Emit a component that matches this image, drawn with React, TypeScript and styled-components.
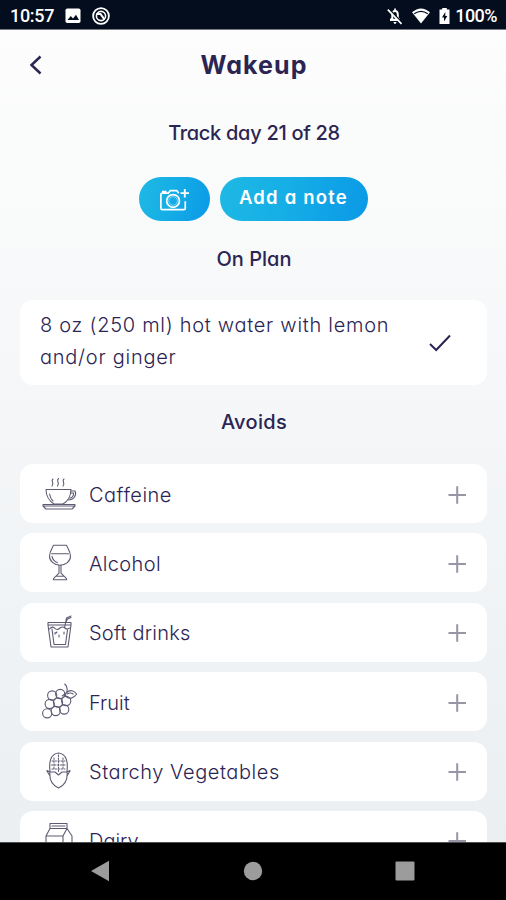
import React from "react";
import styled, { createGlobalStyle } from "styled-components";

const INK = "#2b2553";

const GlobalStyle = createGlobalStyle`
  *, *::before, *::after { box-sizing: border-box; }
  body { margin: 0; background: #000; }
`;

const Screen = styled.div`
  width: 506px;
  height: 900px;
  display: flex;
  flex-direction: column;
  overflow: hidden;
  color: ${INK};
  font-family: Inter, "Open Sans", sans-serif;
  font-feature-settings: "cv11", "ss03";
`;

const StatusBar = styled.header`
  flex: none;
  height: 30px;
  padding: 3px 9px 0 10px;
  display: flex;
  align-items: center;
  justify-content: space-between;
  background: #030d1e;
  border-bottom: 1px solid #77797f;
  color: #fff;
  font: 500 18px/24px Roboto, sans-serif;
`;

const StatusGroup = styled.div<{ $gap: number }>`
  display: flex;
  align-items: center;
  gap: ${(p) => p.$gap}px;
`;

const StatusText = styled.span<{ $spacing: number }>`
  letter-spacing: ${(p) => p.$spacing}px;
`;

const Page = styled.main`
  flex: 1;
  min-height: 0;
  overflow: hidden;
  display: flex;
  flex-direction: column;
  background: linear-gradient(180deg, #fdfdfd 0%, #f9fafa 22%, #f4f6f8 50%, #ebeff1 100%);
`;

const TitleBar = styled.div`
  flex: none;
  height: 70px;
  padding: 0 28px;
  display: grid;
  grid-template-columns: 20px 1fr 20px;
  align-items: center;
`;

const BackButton = styled.button`
  display: flex;
  padding: 0;
  border: 0;
  background: none;
`;

const Title = styled.h1<{ $spacing: number }>`
  margin: 0;
  padding-left: 2px;
  text-align: center;
  font-size: 25px;
  line-height: 32px;
  font-weight: 650;
  letter-spacing: ${(p) => p.$spacing}px;
`;

const Heading = styled.h2<{ $height: number; $lift: number; $spacing: number }>`
  flex: none;
  height: ${(p) => p.$height}px;
  margin: 0;
  padding: 0 0 ${(p) => p.$lift * 2}px 2px;
  display: flex;
  align-items: center;
  justify-content: center;
  font-size: 20px;
  font-weight: 500;
  letter-spacing: ${(p) => p.$spacing}px;
`;

const Actions = styled.div`
  flex: none;
  height: 44px;
  display: flex;
  justify-content: center;
  gap: 10px;
`;

const Pill = styled.button<{ $width: number; $lift?: number }>`
  width: ${(p) => p.$width}px;
  height: 44px;
  padding: 0 0 ${(p) => p.$lift ?? 0}px;
  border: 0;
  border-radius: 22px;
  display: flex;
  align-items: center;
  justify-content: center;
  color: #fff;
  background: linear-gradient(105deg, #1fb9e4 0%, #15aee6 45%, #0b98e6 100%);
  font: inherit;
  font-feature-settings: inherit;
  font-size: 18.5px;
  font-weight: 600;
  letter-spacing: 1.2px;
`;

const PlanCard = styled.section`
  flex: none;
  height: 85px;
  margin: 0 19px 0 20px;
  padding: 0 35px 0 20px;
  display: flex;
  align-items: center;
  justify-content: space-between;
  border-radius: 13px;
  background: #fff;
`;

const PlanText = styled.p`
  margin: 0;
  padding-bottom: 3px;
  font-size: 20px;
  line-height: 32px;
  font-weight: 300;
`;

const Line = styled.span<{ $spacing: number }>`
  display: block;
  white-space: nowrap;
  letter-spacing: ${(p) => p.$spacing}px;
`;

const List = styled.ul`
  flex: none;
  margin: 0 19px 0 20px;
  padding: 0;
  display: flex;
  flex-direction: column;
  gap: 10.4px;
  list-style: none;
`;

const Row = styled.li`
  height: 59px;
  padding: 0 20px 0 19px;
  display: grid;
  grid-template-columns: 40px 1fr 20px;
  column-gap: 10px;
  align-items: center;
  border-radius: 13px;
  background: #fff;
`;

const Label = styled.span<{ $spacing: number }>`
  padding-top: 2px;
  font-size: 20px;
  line-height: 28px;
  font-weight: 300;
  white-space: nowrap;
  letter-spacing: ${(p) => p.$spacing}px;
`;

const NavBar = styled.nav`
  flex: none;
  height: 58px;
  padding: 0 91px 2px 90px;
  display: flex;
  align-items: center;
  justify-content: space-between;
  background: #000;
  border-top: 1px solid #4c4e50;
`;

const LineIcon = styled.svg`
  display: block;
  fill: none;
  stroke: #5d5b72;
  stroke-width: 1.1;
  stroke-linecap: round;
  stroke-linejoin: round;
`;

const Glyph = styled.svg`
  display: block;
  overflow: visible;
`;

const CupIcon = () => (
  <LineIcon width="40" height="40" viewBox="0 -1 40 40">
    <path d="M7 14.5H32C32 20 29 26 24 29H15C10 26 7 20 7 14.5Z" />
    <path d="M32 16H36C38 20 35 25 29 25M31.7 18H34.5C35 21 33 23 30.5 23" />
    <path d="M4 29.5H36V31L33 34H7L4 31ZM4 31H36M10.5 19C11 22 12 24 14 26" />
    <path d="M14 4C11 6 16 8 13 11M19.5 3.5C16.5 6 21.5 8 18.5 11M25 4C22 6 27 8 24 11" />
  </LineIcon>
);

const GlassIcon = () => (
  <LineIcon width="40" height="40" viewBox="-.5 .8 40 40">
    <path d="M14 3H27C28 6 31 9 31 14C31 19 26 23 20.5 23S10 19 10 14C10 9 13 6 14 3ZM12 11.5H29M12.5 14C13 17 15 19.5 18 20.5" />
    <path d="M19.5 23V31L14 36.5V37.5H27V36.5L21.5 31V23M17 34H24" />
  </LineIcon>
);

const DrinkIcon = () => (
  <LineIcon width="40" height="40" viewBox="-1 -2 40 40">
    <path d="M8 8.5H31V11L28 33H11L8 11ZM9 11H30" />
    <path d="M9.5 15Q12 12 14.5 14Q17 17 20 14Q22.5 12 25 14Q27 16 29.5 14M12 15L14 30.5H25.5L27.5 16M24.5 14L26.5 4L31 2M26 8L27.5 5L31 3.5" />
    <path d="M15 18.5V20M19 21V23M24 18V20M16 19L17 18" />
  </LineIcon>
);

const GRAPES = [
  [14, 13.5], [22, 12], [28, 19], [19.8, 20.5], [11.5, 22], [26, 27.5], [17.5, 29], [9, 31.3],
];

const GrapesIcon = () => (
  <LineIcon width="40" height="40" viewBox=".8 0 40 40">
    {GRAPES.map(([x, y]) => (
      <circle key={`${x}-${y}`} cx={x} cy={y} r="4.6" />
    ))}
    <path d="M24 14L28.5 10.5C29.5 8 29 4 26.5 2M28.5 10.5C32 7 36 9 38.5 12C35 17 31 17 28.5 15C26.5 13.5 27 11.5 28.5 10.5ZM29 12Q32 10 35 12" />
  </LineIcon>
);

const CornIcon = () => (
  <LineIcon width="40" height="40" viewBox="0 0 40 40">
    <path d="M11 20C10 12 11 3 19.5 2C28 3 29 12 28 20M11 20C10 28 13 34 19.5 37C26 34 29 28 28 20M8 19.5L11 21H16L19.5 24L23 21H28L31 19.5M11 25L8 20M28 25L31 20" />
    <path d="M15 7V19M19.5 4V21M24 7V19M13 10H26M12.5 14H26.5M13 18H26" strokeWidth="1" strokeDasharray="1.5 1.5" />
  </LineIcon>
);

const MilkIcon = () => (
  <LineIcon width="40" height="40" viewBox="0 -1 40 40">
    <path d="M11 2.5H28V7.5H11ZM11 7.5L7 15V38H33V15L28 7.5M7 15H24V38M24 15L28 7.5L33 15M13 5H26" />
  </LineIcon>
);

const PlusIcon = () => (
  <Glyph width="20" height="20" viewBox="0 0 20 20">
    <path d="M10.2 2.2V19.8M1.5 11H19" fill="none" stroke="#9895a6" strokeWidth="2" />
  </Glyph>
);

const ITEMS: { name: string; spacing: number; Icon: React.FC }[] = [
  { name: "Caffeine", spacing: 0.5, Icon: CupIcon },
  { name: "Alcohol", spacing: 0.35, Icon: GlassIcon },
  { name: "Soft drinks", spacing: 0.2, Icon: DrinkIcon },
  { name: "Fruit", spacing: 0, Icon: GrapesIcon },
  { name: "Starchy Vegetables", spacing: 0.55, Icon: CornIcon },
  { name: "Dairy", spacing: 0, Icon: MilkIcon },
];

export default function App() {
  return (
    <>
      <GlobalStyle />
      <Screen>
        <StatusBar>
          <StatusGroup $gap={11}>
            <StatusText $spacing={-0.3}>10:57</StatusText>
            <Glyph width="16" height="16" viewBox="0 0 16 16">
              <rect x="0.5" y="0.5" width="15" height="14.5" rx="1.8" fill="#fff" />
              <path d="M2.5 12L5.8 8L8 10.4L11 6.8L14 12Z" fill="#030d1e" />
            </Glyph>
            <Glyph width="18" height="18" viewBox="0 0 18 18" fill="none" stroke="#fff">
              <circle cx="9" cy="9" r="7.9" strokeWidth="1.8" />
              <circle cx="9" cy="9" r="4.6" strokeWidth="1.6" />
              <path d="M4.6 7H8.5L12.4 12.4" strokeWidth="2" />
            </Glyph>
          </StatusGroup>
          <StatusGroup $gap={5}>
            <Glyph width="16" height="18" viewBox="0 0 16 18">
              <path d="M3 14V12L4.3 10.8V7.5C4.3 5 5.7 3.4 7.2 3V1.5H8.9V3C10.7 3.5 11.8 5 11.8 7.5V10.8L13 12V14ZM6.4 15H9.6Q9 17 8 17T6.4 15Z" fill="#fff" />
              <path d="M6.2 11.8V8Q6.2 5 8 5T9.8 8V11.8Z" fill="#030d1e" />
              <path d="M1.8 1.8L15.5 16" stroke="#030d1e" strokeWidth="1.6" />
              <path d="M.8 2.6L14.5 16.8" stroke="#fff" strokeWidth="1.7" />
            </Glyph>
            <Glyph width="26" height="18" viewBox="1 0 26 18">
              <path d="M5 5.3Q14 -2.5 23 5.3L14 16.5Z" fill="#fff" />
              <path d="M7.2 6.8Q14 1.8 20.8 6.8" fill="none" stroke="#030d1e" strokeWidth="1.3" />
            </Glyph>
            <Glyph width="11" height="18" viewBox="0 0 11 18">
              <path d="M3.2 1H7.8V2.5H10.5V17H.5V2.5H3.2Z" fill="#fff" />
              <path d="M6.3 5L3 10.5H5V14.5L8.3 9H6.3Z" fill="#030d1e" />
            </Glyph>
            <StatusText $spacing={-0.55}>100%</StatusText>
          </StatusGroup>
        </StatusBar>

        <Page>
          <TitleBar>
            <BackButton aria-label="Back">
              <Glyph width="14" height="20" viewBox="0 0 14 20">
                <path d="M12.5 1.5L3.5 10L12.5 18.5" fill="none" stroke={INK} strokeWidth="2.5" />
              </Glyph>
            </BackButton>
            <Title $spacing={1.1}>Wakeup</Title>
          </TitleBar>
          <Heading $height={77} $lift={6} $spacing={-0.3}>Track day 21 of 28</Heading>
          <Actions>
            <Pill $width={71} aria-label="Add a photo">
              <Glyph width="30" height="22.5" viewBox="0 0 32 24" fill="none" stroke="#fff" strokeWidth="1.8">
                <path d="M21 5.5L19 2.7H12L10 5.5H3.5Q2 5.5 2 7V21.5Q2 23 3.5 23H26.5Q28 23 28 21.5V14M4 5V3.8H8" />
                <circle cx="15" cy="13.8" r="6.8" />
                <circle cx="15" cy="13.8" r="4.6" strokeWidth=".8" opacity=".6" />
                <path d="M27.5 1V10M23 5.5H32" strokeWidth="2" />
              </Glyph>
            </Pill>
            <Pill $width={148} $lift={4}>Add a note</Pill>
          </Actions>
          <Heading $height={79} $lift={2} $spacing={0}>On Plan</Heading>
          <PlanCard>
            <PlanText>
              <Line $spacing={0.72}>8 oz (250 ml) hot water with lemon</Line>
              <Line $spacing={0.75}>and/or ginger</Line>
            </PlanText>
            <Glyph width="24" height="20" viewBox="0 0 24 20">
              <path d="M2 11L8.2 17L22 2.5" fill="none" stroke={INK} strokeWidth="2" />
            </Glyph>
          </PlanCard>
          <Heading $height={79} $lift={2.5} $spacing={0.3}>Avoids</Heading>
          <List>
            {ITEMS.map(({ name, spacing, Icon }) => (
              <Row key={name}>
                <Icon />
                <Label $spacing={spacing}>{name}</Label>
                <PlusIcon />
              </Row>
            ))}
          </List>
        </Page>

        <NavBar>
          <Glyph width="20" height="22" viewBox="0 0 20 22">
            <path d="M1 11L19 .8V21.2Z" fill="#9c9c9c" />
          </Glyph>
          <Glyph width="20" height="20" viewBox="0 0 20 20">
            <circle cx="10" cy="10" r="9.2" fill="#9c9c9c" />
          </Glyph>
          <Glyph width="20" height="20" viewBox="0 0 20 20">
            <rect x=".5" y=".5" width="19" height="19" rx="1" fill="#9c9c9c" />
          </Glyph>
        </NavBar>
      </Screen>
    </>
  );
}
